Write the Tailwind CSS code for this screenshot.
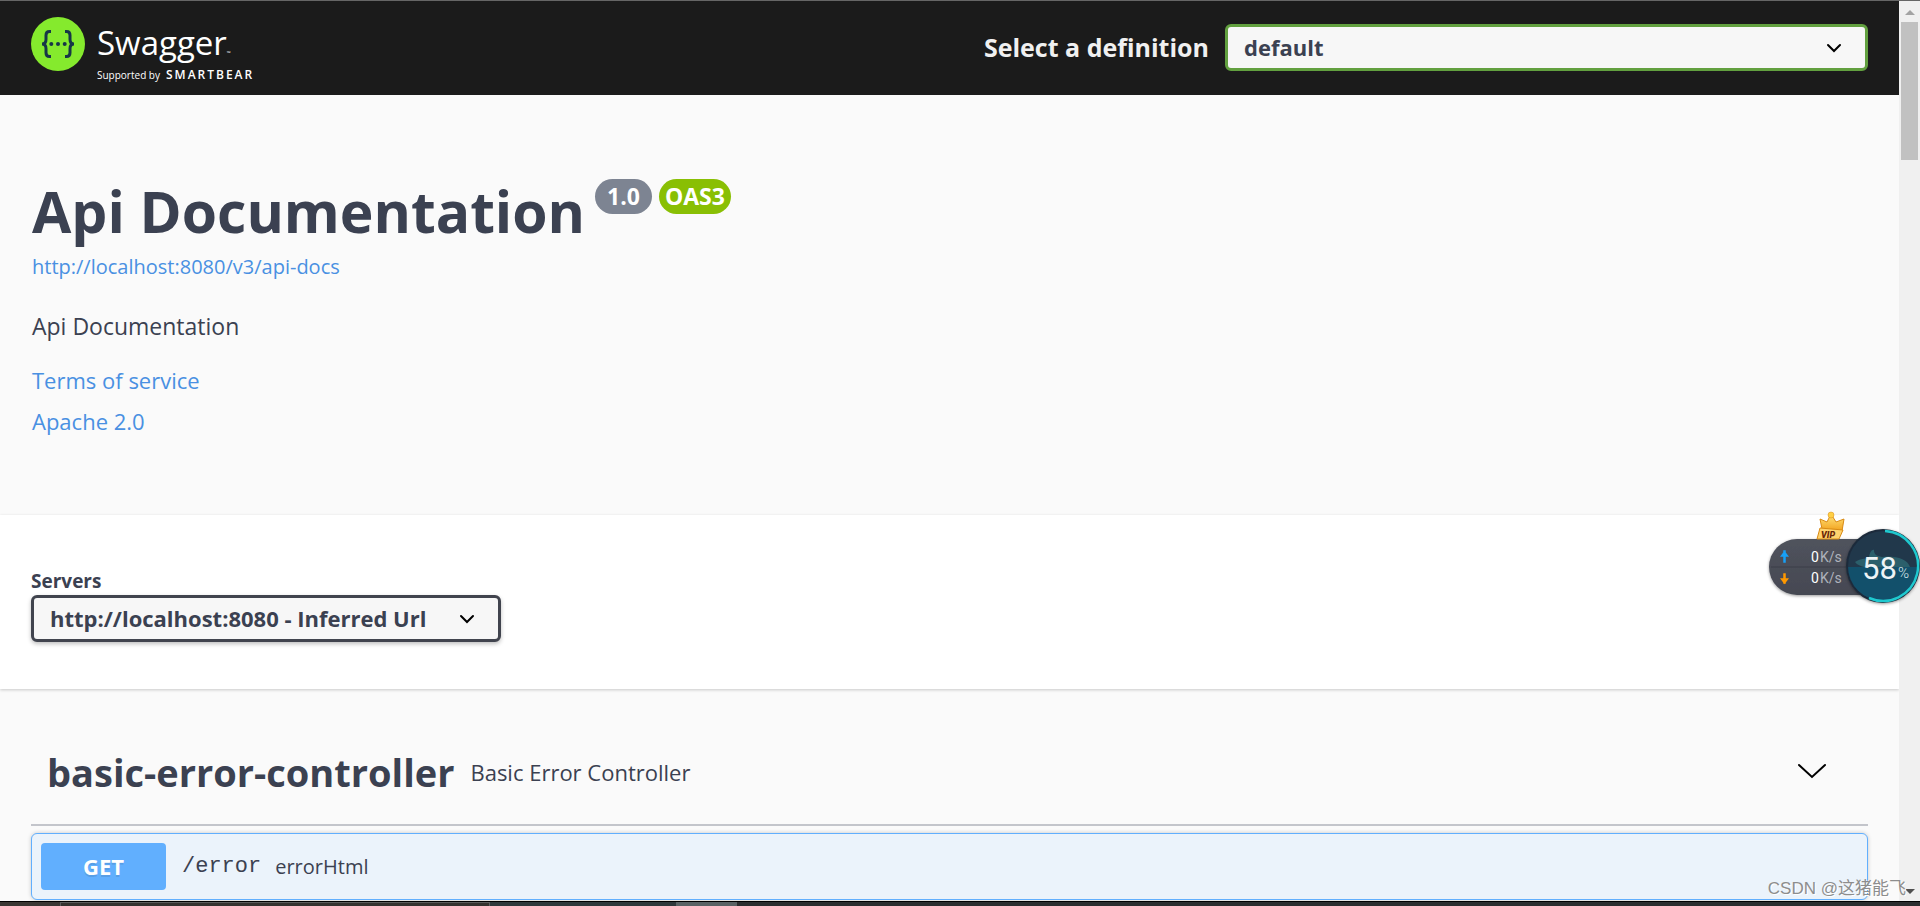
<!DOCTYPE html>
<html lang="en">
<head>
  <meta charset="UTF-8" />
  <meta name="viewport" content="width=device-width, initial-scale=1.0" />
  <title>Swagger UI</title>
  <script src="https://cdn.jsdelivr.net/npm/@tailwindcss/browser@4"></script>
</head>
<body class="flex h-screen flex-col overflow-hidden border-t border-[#666666] bg-[#fafafa] font-['Open_Sans','Noto_Sans_CJK_SC',sans-serif] text-[#3b4151]">

  <div class="flex min-h-0 flex-1">
    <div class="flex min-w-0 flex-1 flex-col overflow-hidden">

      <!-- Topbar -->
      <header class="flex h-[94px] shrink-0 items-start justify-between bg-[#1b1b1b] px-[31px]">
        <a href="#" aria-label="Swagger" class="flex gap-3 pt-4">
          <svg class="size-[54px]" viewBox="0 0 54 54">
            <circle cx="27" cy="27" r="27" fill="#85ea2d" />
            <g fill="none" stroke="#173647" stroke-width="3">
              <path d="M20 14.500h-1.500c-2.500 0-3.500 1.300-3.500 3.700v4c0 3-1 4.800-4 4.800c3 0 4 1.800 4 4.800v4c0 2.400 1 3.700 3.500 3.700h1.500" />
              <path d="M34 14.500h1.500c2.500 0 3.500 1.300 3.500 3.700v4c0 3 1 4.800 4 4.800c-3 0-4 1.800-4 4.800v4c0 2.400-1 3.700-3.500 3.700h-1.500" />
            </g>
            <g fill="#173647">
              <circle cx="20.300" cy="27" r="2" />
              <circle cx="27" cy="27" r="2" />
              <circle cx="33.700" cy="27" r="2" />
            </g>
          </svg>
          <span class="flex flex-col pt-[14px] text-white">
            <span class="text-[33px] leading-6">Swagger<span class="text-[5px]">™</span></span>
            <span class="flex items-baseline gap-[6px] pt-[2px]">
              <span class="text-[10px] leading-4">Supported by</span>
              <span class="text-[12px] leading-4 font-semibold tracking-[2px]">SMARTBEAR</span>
            </span>
          </span>
        </a>
        <div class="flex items-center gap-4 pt-[23px]">
          <label for="definition" class="text-[25px] leading-[47px] font-bold text-[#f0f0f0]">Select a definition</label>
          <div class="grid w-[643px] items-center">
            <select id="definition" class="col-start-1 row-start-1 h-[47px] appearance-none rounded-md border-3 border-[#62a03f] bg-[#f7f7f7] px-4 text-[22px] font-bold">
              <option>default</option>
            </select>
            <svg class="pointer-events-none col-start-1 row-start-1 mr-6 h-5 w-5 justify-self-end" viewBox="0 0 20 20" fill="none" stroke="#000" stroke-width="2" stroke-linecap="round">
              <path d="M4 7l6 6 6-6" />
            </svg>
          </div>
        </div>
      </header>

      <!-- Info -->
      <section class="flex h-[420px] shrink-0 flex-col px-8 pt-[80px]">
        <div class="flex items-start gap-[7px]">
          <h1 class="mr-[3px] text-[57px] leading-[72px] font-bold">Api Documentation</h1>
          <span class="mt-1 rounded-full bg-[#7d8492] px-3 text-[23px] leading-[35px] font-bold text-white">1.0</span>
          <span class="mt-1 rounded-full bg-[#89bf04] px-[6px] text-[23px] leading-[35px] font-bold text-white">OAS3</span>
        </div>
        <a href="#" class="mt-[6px] text-[20px] leading-7 text-[#4990e2]">http://localhost:8080/v3/api-docs</a>
        <p class="mt-[29px] text-[23px] leading-8">Api Documentation</p>
        <a href="#" class="mt-[22px] text-[22px] leading-8 text-[#4990e2]">Terms of service</a>
        <a href="#" class="mt-[9px] text-[22px] leading-8 text-[#4990e2]">Apache 2.0</a>
      </section>

      <!-- Servers -->
      <section class="flex h-[174px] shrink-0 flex-col items-start bg-white px-[31px] pt-[52px] shadow-[0_1px_3px_rgba(0,0,0,0.2)]">
        <label for="servers" class="text-[19px] leading-7 font-bold">Servers</label>
        <div class="grid w-[470px] items-center">
          <select id="servers" class="col-start-1 row-start-1 h-[47px] appearance-none rounded-md border-3 border-[#41444e] bg-[#f7f7f7] px-4 text-[22px] font-bold shadow-[0_2px_4px_rgba(0,0,0,0.25)]">
            <option>http://localhost:8080 - Inferred Url</option>
          </select>
          <svg class="pointer-events-none col-start-1 row-start-1 mr-6 h-5 w-5 justify-self-end" viewBox="0 0 20 20" fill="none" stroke="#000" stroke-width="2" stroke-linecap="round">
            <path d="M4 7l6 6 6-6" />
          </svg>
        </div>
      </section>

      <!-- Operations -->
      <section class="shrink-0 px-[31px] pt-[31px]">
        <div class="flex h-[106px] items-center border-b-2 border-[#c3c5cb] pr-[42px] pl-4">
          <h2 class="text-[38px] font-bold">basic-error-controller</h2>
          <span class="ml-4 flex-1 text-[22px]">Basic Error Controller</span>
          <button type="button" aria-label="Collapse operation">
            <svg class="h-7 w-7" viewBox="0 0 28 28" fill="none" stroke="#000" stroke-width="2" stroke-linecap="round">
              <path d="M1 7l13 12L27 7" />
            </svg>
          </button>
        </div>
        <div class="mt-[7px] flex h-[67px] items-center rounded-md border border-[#61affe] bg-[#ebf3fb] px-[9px] shadow-[0_0_4px_rgba(0,0,0,0.2)]">
          <button type="button" class="h-[47px] w-[125px] rounded bg-[#61affe] text-[22px] font-bold text-white [text-shadow:0_2px_0_rgba(0,0,0,0.1)]">GET</button>
          <a href="#" class="ml-4 font-['Liberation_Mono',monospace] text-[22px]">/error</a>
          <span class="ml-[14px] text-[20px]">errorHtml</span>
        </div>
      </section>
    </div>

    <!-- Scrollbar -->
    <div class="flex w-[21px] shrink-0 flex-col items-center bg-[#f0f0f0]">
      <svg class="h-[21px] w-[10px] shrink-0" viewBox="0 0 10 21"><path d="M0 14L5 9l5 5z" fill="#a3a3a3" /></svg>
      <div class="h-[138px] w-[17px] bg-[#c1c1c1]"></div>
      <svg class="mt-auto h-[21px] w-[10px] shrink-0" viewBox="0 0 10 21"><path d="M0 9l5 5 5-5z" fill="#505050" /></svg>
    </div>
  </div>

  <!-- Taskbar edge -->
  <footer class="flex h-[5px] shrink-0 border-t border-black bg-[#2b2d2f]">
    <div class="w-[60px] bg-[#3a3734]"></div>
    <div class="w-[430px] border-x border-t border-[#5c5c5c] bg-[#35322f]"></div>
    <div class="w-[186px] bg-[#2f383c]"></div>
    <div class="w-[61px] bg-[#5a6265]"></div>
  </footer>

  <!-- Network speed widget -->
  <svg class="absolute top-[508px] right-0 h-[100px] w-[156px]" viewBox="0 0 156 100" font-family="Roboto, sans-serif">
    <defs>
      <linearGradient id="pill" x1="0" y1="0" x2="0" y2="1">
        <stop offset="0" stop-color="#50535d" />
        <stop offset="1" stop-color="#454852" />
      </linearGradient>
      <linearGradient id="gold" x1="0" y1="0" x2="0" y2="1">
        <stop offset="0" stop-color="#ffe680" />
        <stop offset="1" stop-color="#f3a21c" />
      </linearGradient>
      <clipPath id="disc"><circle cx="119" cy="58" r="35" /></clipPath>
      <filter id="drop" x="-20%" y="-20%" width="140%" height="150%"><feDropShadow dx="0" dy="1" stdDeviation="1.500" flood-opacity="0.4" /></filter>
    </defs>
    <rect x="5" y="31" width="120" height="56" rx="28" fill="url(#pill)" filter="url(#drop)" />
    <path d="M7 59h80" stroke="#3c3f48" />
    <path d="M20 54V43h1v11zM20.500 44l-3 4h6z" stroke="#18a0f5" stroke-width="1.500" fill="#18a0f5" />
    <path d="M20 66v9h1v-9zM20.500 75l-3-4h6z" stroke="#ff9900" stroke-width="1.500" fill="#ff9900" />
    <g font-size="14" fill="#aeb2bb">
      <text x="47" y="54"><tspan fill="#fff">0</tspan><tspan dx="1">K/s</tspan></text>
      <text x="47" y="75"><tspan fill="#fff">0</tspan><tspan dx="1">K/s</tspan></text>
    </g>
    <path d="M58 21l-2-10 7 3 4-8 5 8 8-3-2 12z" fill="url(#gold)" stroke="#d98a14" />
    <circle cx="67" cy="7" r="3" fill="#ffd045" stroke="#d98a14" stroke-width="0.500" />
    <path d="M56 20l23 2-4 9H53z" fill="#ffd36e" stroke="#d98a14" />
    <text x="57" y="30" font-size="9" font-weight="900" font-style="italic" fill="#6b2606">VIP</text>
    <circle cx="119" cy="58" r="37" fill="#1d2b3a" filter="url(#drop)" />
    <g clip-path="url(#disc)">
      <rect x="80" y="20" width="80" height="80" fill="#21384b" />
      <path d="M91 54c6-4 12-3 14-5 1-5 3-8 5-7 0 4 2 6 8 7 12-2 26 2 28 10H100c-3-1-7-2-9-5z" fill="#2b5f6b" />
      <rect x="80" y="59" width="80" height="40" fill="#12506b" />
    </g>
    <path d="M121 23A35 35 0 1 1 105 90" fill="none" stroke="#1fc9cf" stroke-width="2.500" />
    <text x="98" y="71" font-size="31" fill="#eef4f6">58</text>
    <text x="134" y="70" font-size="15" font-weight="300" fill="#dfe8ec">%</text>
  </svg>

  <!-- Watermark -->
  <div class="absolute right-[14px] bottom-[3px] font-['Liberation_Sans','Noto_Sans_CJK_SC',sans-serif] text-[17px] leading-7 text-[#8d8d8d] [text-shadow:1px_1px_0_#ffffff]">CSDN @这猪能飞</div>

</body>
</html>
